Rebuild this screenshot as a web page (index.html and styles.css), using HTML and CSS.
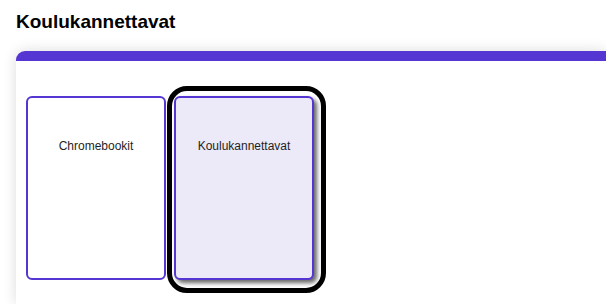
FILE: index.html
```html
<!DOCTYPE html>
<html lang="fi">
<head>
<meta charset="utf-8">
<title>Koulukannettavat</title>
<link rel="stylesheet" href="styles.css">
</head>
<body>
<div class="page">
  <h1 class="title">Koulukannettavat</h1>
  <section class="panel">
    <div class="cards">
      <button class="card">Chromebookit</button>
      <button class="card card--selected">Koulukannettavat</button>
    </div>
  </section>
</div>
</body>
</html>
```
FILE: styles.css
```css
html, body {
  margin: 0;
  padding: 0;
  overflow: hidden;
  background: #ffffff;
}
.page {
  padding: 11px 0 0 16px;
  font-family: "Liberation Sans", Arial, sans-serif;
}
.title {
  margin: 0 0 18px 0;
  font-size: 19px;
  line-height: 22px;
  font-weight: bold;
  color: #000000;
}
.panel {
  width: 590px;
  height: 253px;
  box-sizing: border-box;
  background: #ffffff;
  border-top: 10px solid #5636d2;
  border-top-left-radius: 9px;
  box-shadow: 0 0 14px rgba(0, 0, 0, 0.14);
  padding: 35px 10px 0 10px;
}
.cards {
  display: flex;
  gap: 8px;
}
.card {
  position: relative;
  width: 140px;
  height: 184px;
  box-sizing: border-box;
  border: 2px solid #5636d2;
  border-radius: 6px;
  background: #ffffff;
  padding: 41px 4px 0 4px;
  display: flex;
  justify-content: center;
  align-items: flex-start;
  font-family: "Liberation Sans", Arial, sans-serif;
  font-size: 12px;
  line-height: 14px;
  color: #1f1f1f;
  cursor: pointer;
}
.card--selected {
  background: #ece9f8;
  box-shadow: 3px 3px 4px rgba(0, 0, 0, 0.6);
}
.card--selected::after {
  content: "";
  position: absolute;
  top: -12px;
  left: -9px;
  right: -14px;
  bottom: -15px;
  border: 5px solid #000000;
  border-radius: 20px;
  pointer-events: none;
}
```
